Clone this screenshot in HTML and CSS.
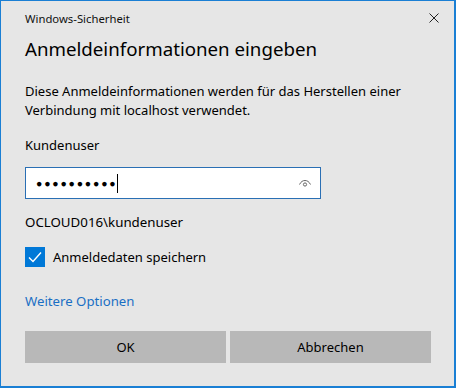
FILE: index.html
```html
<!DOCTYPE html>
<html lang="de">
<head>
<meta charset="utf-8">
<title>Windows-Sicherheit</title>
<link rel="stylesheet" href="styles.css">
</head>
<body>
<div class="window">
  <div class="titlebar">
    <span class="app-title">Windows-Sicherheit</span>
    <svg class="close" width="10" height="10" viewBox="0 0 10 10"><path d="M0.5 0.5L9.5 9.5M9.5 0.5L0.5 9.5" stroke="#222" stroke-width="1"/></svg>
  </div>
  <h1 class="heading">Anmeldeinformationen eingeben</h1>
  <p class="desc">Diese Anmeldeinformationen werden für das Herstellen einer Verbindung mit localhost verwendet.</p>
  <div class="user">Kundenuser</div>
  <div class="field">
    <span class="dots">●●●●●●●●●●</span><span class="caret"></span>
    <svg class="eye" width="14" height="10" viewBox="0 0 14 10"><path d="M1.5 6.5C3 3.5 5 2.5 7 2.5S11 3.5 12.5 6.5" fill="none" stroke="#666" stroke-width="1"/><circle cx="7" cy="6.5" r="1.6" fill="none" stroke="#666" stroke-width="1"/></svg>
  </div>
  <div class="domain">OCLOUD016\kundenuser</div>
  <label class="check">
    <span class="box"><svg width="20" height="20" viewBox="0 0 20 20"><path d="M4 10.5L8 14.5L16 5.5" fill="none" stroke="#fff" stroke-width="1.4"/></svg></span>
    <span>Anmeldedaten speichern</span>
  </label>
  <a class="more" href="#">Weitere Optionen</a>
  <div class="buttons">
    <button class="btn">OK</button>
    <button class="btn">Abbrechen</button>
  </div>
</div>
</body>
</html>
```
FILE: styles.css
```css
html, body { margin: 0; padding: 0; }
body {
  width: 456px;
  height: 388px;
  background: #e6e6e6;
  font-family: "Noto Sans", "Open Sans", sans-serif;
  color: #000;
}
.window {
  box-sizing: border-box;
  width: 456px;
  height: 388px;
  border: 1px solid #1a7fd4;
  border-right-width: 2px;
  border-bottom-width: 2px;
  padding: 0 24px;
  display: flex;
  flex-direction: column;
}
.titlebar {
  display: flex;
  justify-content: space-between;
  align-items: center;
  height: 34px;
}
.app-title { font-size: 11.3px; color: #111; }
.close { margin-right: -9px; }
.heading {
  margin: 0;
  font-size: 18.7px;
  font-weight: 400;
  line-height: 28px;
}
.desc {
  margin: 19px 0 0;
  font-size: 13px;
  line-height: 19px;
}
.user { margin-top: 16px; font-size: 13px; line-height: 19px; }
.field {
  box-sizing: border-box;
  margin-top: 12px;
  width: 296px;
  height: 32px;
  background: #fff;
  border: 1px solid #2a6fb4;
  display: flex;
  align-items: center;
  padding: 0 8px 0 10px;
}
.dots { font-size: 10.5px; letter-spacing: 1.8px; }
.caret { width: 1px; height: 19px; background: #000; margin-left: 0; }
.eye { margin-left: auto; }
.domain { margin-top: 14px; font-size: 13.3px; line-height: 19px; }
.check { margin-top: 15px; display: flex; align-items: center; gap: 8px; font-size: 13px; }
.box { width: 20px; height: 20px; background: #0078d7; display: block; }
.box svg { display: block; }
.more { margin-top: 25px; font-size: 13.2px; color: #1a6fc4; text-decoration: none; line-height: 19px; }
.buttons { margin-top: 20px; display: flex; gap: 4px; width: 406px; }
.btn {
  flex: 1;
  height: 32px;
  border: none;
  background: #b8b8b8;
  font-family: inherit;
  font-size: 13px;
  color: #000;
}
```
